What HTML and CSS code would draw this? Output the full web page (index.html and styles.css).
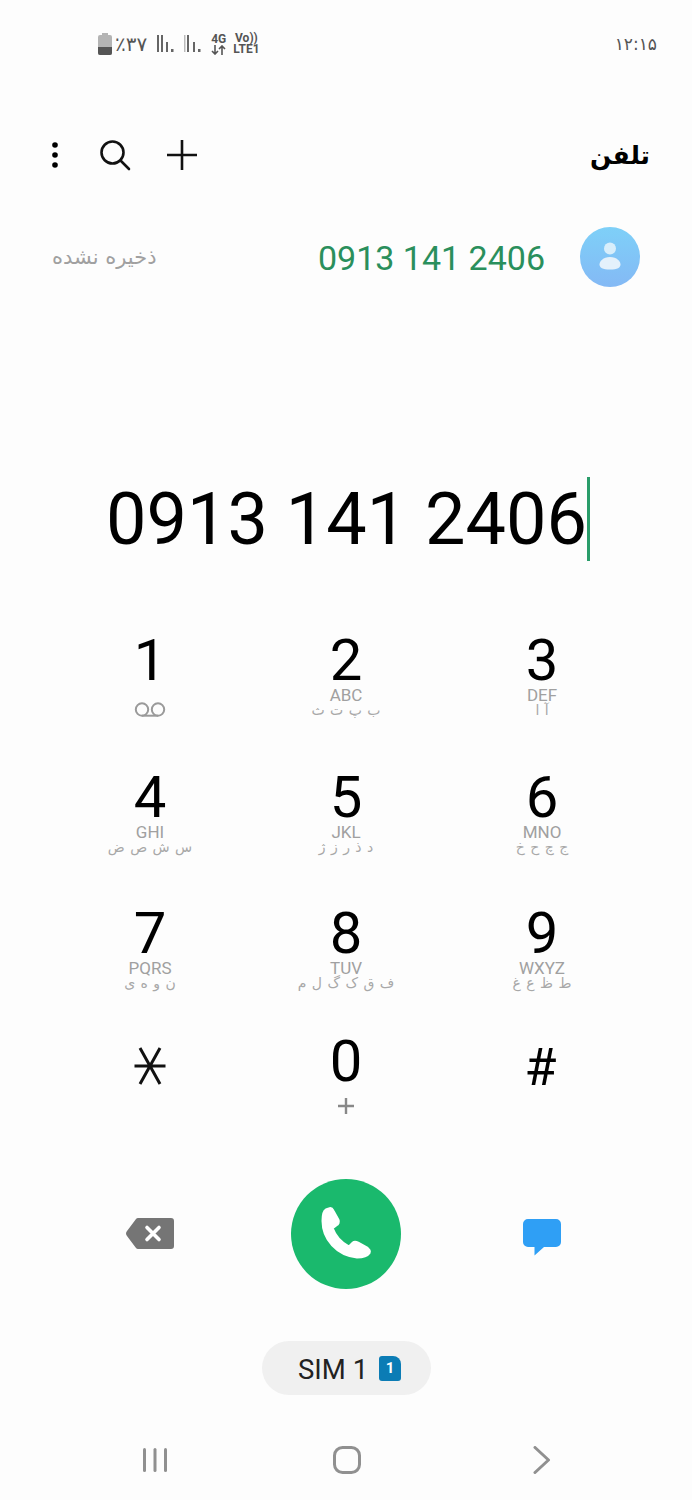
FILE: index.html
```html
<!DOCTYPE html>
<html lang="en">
  <head>
    <meta charset="UTF-8" />
    <meta name="viewport" content="width=device-width, initial-scale=1.0" />
    <title>Phone</title>
    <link rel="stylesheet" href="styles.css">
  </head>
  <body>
    <div class="phone">
      <!-- Status bar -->
      <div class="status-bar">
        <div class="status-left">
          <svg class="battery" width="14" height="22" viewBox="0 0 14 22">
            <path d="M4 0h6v2h2a2 2 0 0 1 2 2v16a2 2 0 0 1-2 2H2a2 2 0 0 1-2-2V4a2 2 0 0 1 2-2h2z" fill="#b4b4b4" />
            <path d="M0 14h14v6a2 2 0 0 1-2 2H2a2 2 0 0 1-2-2z" fill="#555" />
          </svg>
          <span class="battery-text" dir="rtl">٪۳۷</span>
          <svg class="signal" width="18" height="18" viewBox="0 0 18 18">
            <path d="M1 0h2v17H1zM5 0h2v17H5zM10 7h2v10h-2zM15 14h2.500v3H15z" fill="#666" />
          </svg>
          <svg class="signal" width="18" height="18" viewBox="0 0 18 18">
            <path d="M1 0h1.500v17H1z" fill="#bbb" />
            <path d="M4 0h2v17H4zM10 7h2v10h-2zM15 14h2.500v3H15z" fill="#666" />
          </svg>
          <div class="net">
            <span>4G</span>
            <svg width="15" height="10" viewBox="0 0 15 10" fill="none" stroke="#555" stroke-width="1.600">
              <path d="M4 0v9M1 6l3 3 3-3M11 10V1M8 4l3-3 3 3" />
            </svg>
          </div>
          <div class="net net-lte"><span>Vo))</span><span>LTE1</span></div>
        </div>
        <span class="clock" dir="rtl">۱۲:۱۵</span>
      </div>

      <!-- Title row -->
      <div class="top-bar">
        <div class="top-icons">
          <svg width="8" height="28" viewBox="0 0 8 28">
            <circle cx="4" cy="4" r="2.800" /><circle cx="4" cy="14" r="2.800" /><circle cx="4" cy="24" r="2.800" />
          </svg>
          <svg class="icon-search" width="32" height="32" viewBox="0 0 32 32" fill="none" stroke="#111" stroke-width="2.600">
            <circle cx="13.500" cy="13.500" r="11" />
            <path d="M21.500 21.500 30 30" stroke-linecap="round" />
          </svg>
          <svg class="icon-plus" width="32" height="32" viewBox="0 0 32 32" fill="none" stroke="#111" stroke-width="2.600">
            <path d="M1 16h30M16 1v30" />
          </svg>
        </div>
        <h1 dir="rtl">تلفن</h1>
      </div>

      <!-- Matching contact -->
      <div class="contact-row">
        <span class="unsaved" dir="rtl">ذخیره نشده</span>
        <div class="contact">
          <span class="contact-number">0913 141 2406</span>
          <svg class="avatar" width="60" height="60" viewBox="0 0 60 60">
            <defs>
              <linearGradient id="avatarFill" x1="0" y1="0" x2="0" y2="1">
                <stop offset="0" stop-color="#7ed0f8" />
                <stop offset="1" stop-color="#84b9f5" />
              </linearGradient>
            </defs>
            <circle cx="30" cy="30" r="30" fill="url(#avatarFill)" />
            <circle cx="30" cy="21.500" r="6" fill="#d8eefb" />
            <path d="M30 30c7 0 10.500 4.500 10.500 7.500 0 3-3 5-10.500 5s-10.500-2-10.500-5c0-3 3.500-7.500 10.500-7.500z" fill="#e4f1fb" />
          </svg>
        </div>
      </div>

      <!-- Typed number -->
      <div class="display">
        <span class="display-number">0913 141 2406</span><span class="caret"></span>
      </div>

      <!-- Keypad -->
      <div class="keypad">
        <div class="key">
          <span class="digit">1</span>
          <svg class="voicemail" width="32" height="15" viewBox="0 0 32 15" fill="none" stroke="#9a9a9a" stroke-width="2">
            <circle cx="8" cy="7.500" r="6.200" /><circle cx="24" cy="7.500" r="6.200" />
            <path d="M8 13.700h16" />
          </svg>
        </div>
        <div class="key">
          <span class="digit">2</span><span class="latin">ABC</span><span class="arabic" dir="rtl">ب پ ت ث</span>
        </div>
        <div class="key">
          <span class="digit">3</span><span class="latin">DEF</span><span class="arabic" dir="rtl">آ ا</span>
        </div>
        <div class="key">
          <span class="digit">4</span><span class="latin">GHI</span><span class="arabic" dir="rtl">س ش ص ض</span>
        </div>
        <div class="key">
          <span class="digit">5</span><span class="latin">JKL</span><span class="arabic" dir="rtl">د ذ ر ز ژ</span>
        </div>
        <div class="key">
          <span class="digit">6</span><span class="latin">MNO</span><span class="arabic" dir="rtl">ج چ ح خ</span>
        </div>
        <div class="key">
          <span class="digit">7</span><span class="latin">PQRS</span><span class="arabic" dir="rtl">ن و ه ی</span>
        </div>
        <div class="key">
          <span class="digit">8</span><span class="latin">TUV</span><span class="arabic" dir="rtl">ف ق ک گ ل م</span>
        </div>
        <div class="key">
          <span class="digit">9</span><span class="latin">WXYZ</span><span class="arabic" dir="rtl">ط ظ ع غ</span>
        </div>
        <div class="key">
          <svg class="star" width="32" height="38" viewBox="0 0 32 38" fill="none" stroke="#111" stroke-width="3">
            <path d="M0.500 19h31M6 1l20 36M26 1 6 37" />
          </svg>
        </div>
        <div class="key">
          <span class="digit">0</span>
          <svg class="zero-plus" width="16" height="16" viewBox="0 0 16 16" fill="none" stroke="#888" stroke-width="2.400">
            <path d="M0 8h16M8 0v16" />
          </svg>
        </div>
        <div class="key">
          <span class="digit hash">#</span>
        </div>
      </div>

      <!-- Actions -->
      <div class="actions">
        <svg width="48" height="32" viewBox="0 0 48 32">
          <path d="M12 0h33a3 3 0 0 1 3 3v25a3 3 0 0 1-3 3H12a3 3 0 0 1-2-1L1 18a4 4 0 0 1 0-5l9-12a3 3 0 0 1 2-1z" fill="#757575" />
          <path d="M21 9.500 33 21.500M33 9.500 21 21.500" stroke="#fff" stroke-width="3.600" stroke-linecap="round" />
        </svg>
        <div class="call-button">
          <svg width="110" height="110" viewBox="0 0 110 110">
            <path d="M35 31 38 30C40 29 41 30 42 32L47 41C48 43 47 45 45 46L41 49C44 57 50 64 58 68L62 64C63 63 65 63 67 64L76 69C78 71 79 72 78 74 76 77 72 78 66 78 46 76 32 60 32 42 32 36 33 32 35 31Z" fill="#fff" stroke="#fff" stroke-width="3" stroke-linejoin="round" />
          </svg>
        </div>
        <svg class="message" width="38" height="37" viewBox="0 0 38 37">
          <path d="M5 0h28a5 5 0 0 1 5 5v18a5 5 0 0 1-5 5H21l-9.500 8.500V28H5a5 5 0 0 1-5-5V5a5 5 0 0 1 5-5z" fill="#2f9ff5" />
        </svg>
      </div>

      <!-- SIM selector -->
      <div class="sim-row">
        <div class="sim-pill">
          <span class="sim-name">SIM 1</span>
          <div class="sim-badge">1</div>
        </div>
      </div>

      <!-- Navigation bar -->
      <div class="nav-bar">
        <svg class="nav-recents" width="26" height="26" viewBox="0 0 26 26" fill="#909090">
          <rect x="1" y="1" width="3" height="24" rx="1.500" /><rect x="11.500" y="1" width="3" height="24" rx="1.500" /><rect x="22" y="1" width="3" height="24" rx="1.500" />
        </svg>
        <svg class="nav-home" width="28" height="28" viewBox="0 0 28 28" fill="none" stroke="#909090" stroke-width="3">
          <rect x="1.500" y="1.500" width="25" height="25" rx="8" />
        </svg>
        <svg width="18" height="28" viewBox="0 0 18 28" fill="none" stroke="#909090" stroke-width="3" stroke-linecap="round" stroke-linejoin="round">
          <path d="M2 1.500 15.500 14 2 26.500" />
        </svg>
      </div>
    </div>
  </body>
</html>
```

FILE: styles.css
```css
body {
  margin: 0;
  padding: 0;
  background-color: #fdfdfd;
  font-family: Roboto, sans-serif;
  color: #111;
}
.phone {
  width: 692px;
  height: 1500px;
  overflow: hidden;
}
.status-bar {
  height: 88px;
  display: flex;
  justify-content: space-between;
  align-items: center;
  padding: 0 35px 0 98px;
  box-sizing: border-box;
}
.status-left {
  display: flex;
  align-items: center;
}
.battery-text {
  margin-left: 3px;
  font-family: "DejaVu Sans", sans-serif;
  font-size: 20px;
  color: #555;
}
.signal {
  margin-left: 9px;
}
.net {
  display: flex;
  flex-direction: column;
  align-items: center;
  margin-left: 10px;
  font-size: 12px;
  font-weight: 700;
  line-height: 11px;
  color: #555;
}
.net-lte {
  margin-left: 7px;
}
.clock {
  font-family: "DejaVu Sans", sans-serif;
  font-size: 17px;
  color: #555;
}
.top-bar {
  height: 134px;
  display: flex;
  justify-content: space-between;
  align-items: center;
  padding: 0 42px 0 51px;
  box-sizing: border-box;
}
.top-icons {
  display: flex;
  align-items: center;
}
.icon-search {
  margin-left: 40px;
}
.icon-plus {
  margin-left: 35px;
}
h1 {
  margin: 0;
  font-family: "DejaVu Sans", sans-serif;
  font-size: 25px;
  font-weight: 700;
  color: #000;
}
.contact-row {
  height: 70px;
  display: flex;
  justify-content: space-between;
  align-items: center;
  padding: 0 52px;
}
.unsaved {
  font-family: "DejaVu Sans", sans-serif;
  font-size: 21px;
  color: #a0a0a0;
}
.contact {
  display: flex;
  align-items: center;
  gap: 35px;
}
.contact-number {
  padding-top: 2px;
  font-size: 34px;
  color: #2a8f5c;
}
.display {
  margin-top: 177px;
  height: 100px;
  display: flex;
  justify-content: center;
  align-items: center;
  padding-left: 4px;
}
.display-number {
  padding-top: 2px;
  font-size: 72px;
  line-height: 100px;
  color: #000;
}
.caret {
  width: 3px;
  height: 84px;
  background: #2a9d6a;
}
.keypad {
  margin-top: 23px;
  display: grid;
  grid-template-columns: 196px 196px 196px;
  grid-template-rows: 136.5px 136.5px 128px 177px;
  justify-content: center;
}
.key {
  display: flex;
  flex-direction: column;
  align-items: center;
  padding-top: 40px;
  box-sizing: border-box;
}
.digit {
  font-size: 58px;
  line-height: 56px;
  color: #000;
}
.latin {
  font-size: 17px;
  line-height: 15px;
  color: #a0a0a0;
}
.arabic {
  font-family: "DejaVu Sans", sans-serif;
  font-size: 14px;
  line-height: 15px;
  color: #a8a8a8;
  word-spacing: 1px;
}
.voicemail {
  margin-top: 14px;
}
.star {
  margin-top: 14px;
}
.zero-plus {
  margin-top: 9px;
}
.hash {
  margin-top: 7px;
  margin-right: 3px;
  font-size: 52px;
}
.actions {
  height: 128px;
  display: grid;
  grid-template-columns: 196px 196px 196px;
  justify-content: center;
  justify-items: center;
  align-items: center;
}
.message {
  margin-top: 6px;
}
.call-button {
  width: 110px;
  height: 110px;
  border-radius: 50%;
  background: #1ab96d;
}
.sim-row {
  margin-top: 43px;
  display: flex;
  justify-content: center;
}
.sim-pill {
  width: 169px;
  height: 54px;
  display: flex;
  align-items: center;
  gap: 11px;
  margin-left: 1px;
  padding-left: 36px;
  box-sizing: border-box;
  border-radius: 27px;
  background: #f0f0f0;
  font-size: 27.5px;
  color: #222;
}
.sim-name {
  padding-top: 3px;
}
.sim-badge {
  width: 22px;
  height: 25px;
  display: flex;
  justify-content: center;
  align-items: center;
  border-radius: 3px 8px 3px 3px;
  background: #0b7cb5;
  color: #fff;
  font-size: 15px;
  font-weight: 700;
}
.nav-bar {
  margin-top: 40px;
  height: 50px;
  display: grid;
  grid-template-columns: 196px 196px 196px;
  justify-content: center;
  justify-items: center;
  align-items: center;
}
.nav-recents {
  margin-left: 9px;
}
.nav-home {
  margin-left: 2px;
}
```
